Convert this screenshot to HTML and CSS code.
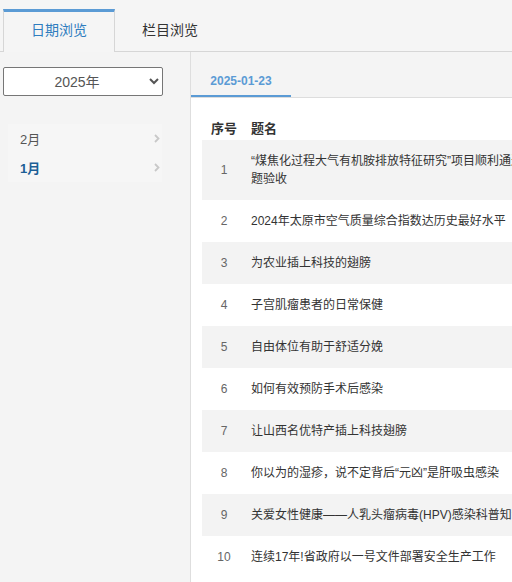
FILE: index.html
```html
<!DOCTYPE html>
<html lang="zh-CN">

<head>
    <meta charset="UTF-8">
    <meta name="viewport" content="width=device-width, initial-scale=1.0">
    <title>日期浏览</title>
    <link rel="stylesheet" href="styles.css">
</head>

<body>
    <!-- 상단 탭 -->
    <div class="top_tabs">
        <div class="top_tab active">日期浏览</div>
        <div class="top_tab">栏目浏览</div>
    </div>

    <div class="main_wrap">
        <!-- 왼쪽 : 연도 / 월 -->
        <div class="side">
            <select class="year_select" name="year">
                <option value="2025">2025年</option>
                <option value="2024">2024年</option>
            </select>

            <ul class="month_list">
                <li class="month_item">
                    <span>2月</span>
                    <svg class="arrow" width="6" height="9" viewBox="0 0 6 9"><polyline points="1,1 4.5,4.5 1,8" fill="none" stroke="#c8c8c8" stroke-width="1.8" /></svg>
                </li>
                <li class="month_item current">
                    <span>1月</span>
                    <svg class="arrow" width="6" height="9" viewBox="0 0 6 9"><polyline points="1,1 4.5,4.5 1,8" fill="none" stroke="#c8c8c8" stroke-width="1.8" /></svg>
                </li>
            </ul>
        </div>

        <!-- 오른쪽 : 날짜 + 목록 -->
        <div class="content">
            <div class="date_bar">
                <div class="date_tab">2025-01-23</div>
            </div>

            <div class="list_panel">
                <table class="list_table">
                    <tr class="head">
                        <th class="no">序号</th>
                        <th class="title">题名</th>
                    </tr>
                    <tr>
                        <td class="no">1</td>
                        <td class="title">“煤焦化过程大气有机胺排放特征研究”项目顺利通过课题验收</td>
                    </tr>
                    <tr>
                        <td class="no">2</td>
                        <td class="title">2024年太原市空气质量综合指数达历史最好水平</td>
                    </tr>
                    <tr>
                        <td class="no">3</td>
                        <td class="title">为农业插上科技的翅膀</td>
                    </tr>
                    <tr>
                        <td class="no">4</td>
                        <td class="title">子宫肌瘤患者的日常保健</td>
                    </tr>
                    <tr>
                        <td class="no">5</td>
                        <td class="title">自由体位有助于舒适分娩</td>
                    </tr>
                    <tr>
                        <td class="no">6</td>
                        <td class="title">如何有效预防手术后感染</td>
                    </tr>
                    <tr>
                        <td class="no">7</td>
                        <td class="title">让山西名优特产插上科技翅膀</td>
                    </tr>
                    <tr>
                        <td class="no">8</td>
                        <td class="title">你以为的湿疹，说不定背后“元凶”是肝吸虫感染</td>
                    </tr>
                    <tr>
                        <td class="no">9</td>
                        <td class="title">关爱女性健康——人乳头瘤病毒(HPV)感染科普知识</td>
                    </tr>
                    <tr>
                        <td class="no">10</td>
                        <td class="title">连续17年!省政府以一号文件部署安全生产工作</td>
                    </tr>
                </table>
            </div>
        </div>
    </div>
</body>

</html>
```

FILE: styles.css
```css
/* 기본 */
html, body {
    overflow: hidden;
}

body {
    margin: 0;
    background-color: #f4f4f4;

    font-family: "Liberation Sans", "Noto Sans CJK SC", sans-serif;
    color: #333;
}

/* 상단 탭 */
.top_tabs {
    display: flex;
    align-items: flex-end;

    height: 51px;
    padding-left: 3px;
    border-bottom: 1px solid #d6d6d6;
    background-color: #f5f5f5;
}

.top_tab {
    box-sizing: border-box;
    width: 110px;
    height: 43px;
    margin-bottom: -1px;
    padding-top: 11px;

    font-size: 14px;
    line-height: 20px;
    text-align: center;
    color: #333;
}

.top_tab.active {
    width: 112px;
    padding-top: 8px;

    border-top: 3px solid #5b9bd5;
    border-left: 1px solid #d6d6d6;
    border-right: 1px solid #d6d6d6;
    background-color: #f5f5f5;
    color: #2f7dbf;
}

/* 본문 */
.main_wrap {
    display: flex;
    height: 600px;
}

.side {
    width: 190px;
    flex-shrink: 0;
    padding-top: 15px;

    border-right: 1px solid #dedede;
}

.year_select {
    display: block;
    width: 160px;
    height: 29px;
    margin-left: 3px;

    border: 1px solid #767676;
    border-radius: 2px;
    background-color: #fff;

    font-family: "Liberation Sans", "Noto Sans CJK SC", sans-serif;
    font-size: 14px;
    color: #555;
    text-align-last: center;
}

.month_list {
    list-style: none;
    margin: 28px 0 0 8px;
    padding: 0;
    width: 154px;
    background-color: #f6f6f6;
}

.month_item {
    display: flex;
    justify-content: space-between;
    align-items: center;

    height: 29px;
    padding: 0 2px 0 12px;

    font-size: 13px;
    color: #555;
}

.month_item.current {
    font-weight: bold;
    color: #1d5f96;
}

.content {
    display: flex;
    flex-direction: column;
    flex: 1;
    min-width: 700px;
}

/* 날짜 탭 */
.date_bar {
    height: 45px;
    border-bottom: 1px solid #dddddd;
}

.date_tab {
    box-sizing: border-box;
    width: 100px;
    height: 45px;
    padding-top: 19px;

    border-bottom: 2px solid #5b9bd5;

    font-size: 12px;
    font-weight: bold;
    line-height: 20px;
    text-align: center;
    color: #5b9bd5;
}

/* 목록 */
.list_panel {
    flex: 1;
    padding: 20px 0 0 11px;
    background-color: #fff;
}

.list_table {
    border-collapse: collapse;
}

.list_table th,
.list_table td {
    padding-top: 12px;
    padding-bottom: 12px;

    font-size: 12px;
    line-height: 18px;
    text-align: left;
    vertical-align: middle;
}

.list_table .head th {
    padding-top: 2px;
    padding-bottom: 2px;
    font-size: 13px;
    color: #333;
}

.list_table .no {
    width: 44px;
    padding-left: 0;
    padding-right: 0;
    text-align: center;
    color: #666;
}

.list_table .head .no {
    color: #333;
}

.list_table .title {
    width: 290px;
    padding-left: 5px;
    padding-right: 40px;
}

.list_table tr:nth-child(even) {
    background-color: #f3f3f3;
}
```
